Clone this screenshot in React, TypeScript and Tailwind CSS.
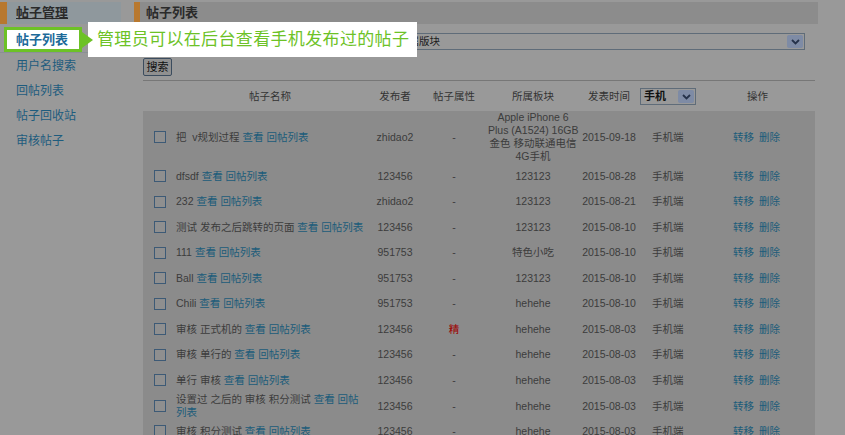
const font = "font-['Liberation_Sans','Noto_Sans_CJK_SC',sans-serif]";

type Row = {
  name: React.ReactNode;
  author: string;
  attr: string;
  board: React.ReactNode;
  date: string;
  tall?: boolean;
};

const Links = ({ br }: { br?: boolean }) => (
  <>
    <span className="text-[#1b5c7a]">查看</span>{' '}
    <span className="text-[#1b5c7a]">
      回帖{br ? <br /> : null}列表
    </span>
  </>
);

const rows: Row[] = [
  {
    name: '把\u00a0 v规划过程',
    author: 'zhidao2',
    attr: '-',
    board: (
      <>
        Apple iPhone 6
        <br />
        Plus (A1524) 16GB
        <br />
        金色 移动联通电信
        <br />
        4G手机
      </>
    ),
    date: '2015-09-18',
    tall: true,
  },
  { name: 'dfsdf', author: '123456', attr: '-', board: '123123', date: '2015-08-28' },
  { name: '232', author: 'zhidao2', attr: '-', board: '123123', date: '2015-08-21' },
  { name: '测试 发布之后跳转的页面', author: '123456', attr: '-', board: '123123', date: '2015-08-10' },
  { name: '111', author: '951753', attr: '-', board: '特色小吃', date: '2015-08-10' },
  { name: 'Ball', author: '951753', attr: '-', board: '123123', date: '2015-08-10' },
  { name: 'Chili', author: '951753', attr: '-', board: 'hehehe', date: '2015-08-10' },
  { name: '审核 正式机的', author: '123456', attr: '精', board: 'hehehe', date: '2015-08-03' },
  { name: '审核 单行的', author: '123456', attr: '-', board: 'hehehe', date: '2015-08-03' },
  { name: '单行 审核', author: '123456', attr: '-', board: 'hehehe', date: '2015-08-03' },
  { name: '设置过 之后的 审核 积分测试', author: '123456', attr: '-', board: 'hehehe', date: '2015-08-03' },
  { name: '审核 积分测试', author: '123456', attr: '-', board: 'hehehe', date: '2015-08-03' },
];

const cols = 'grid grid-cols-[27px_200px_50px_68px_90px_62px_60px_115px]';

function Chevron() {
  return (
    <svg width="9" height="6" viewBox="0 0 9 6">
      <path d="M1 1 L4.5 4.5 L8 1" stroke="#25324a" strokeWidth="1.8" fill="none" />
    </svg>
  );
}

const sideItems = ['帖子列表', '用户名搜索', '回帖列表', '帖子回收站', '审核帖子'];

export default function App() {
  return (
    <div className={`${font} relative flex h-[435px] w-[845px] overflow-hidden bg-[#999999] pt-[2px]`}>
      {/* sidebar */}
      <div className="w-[121px] shrink-0">
        <div className="flex h-[22px] bg-[#8f989d]">
          <div className="w-[7px] bg-[#b8782f]" />
          <span className="pl-[9px] text-[13px] font-bold leading-[22px] text-[#2a2a2a] underline">帖子管理</span>
        </div>
        <div className="mt-[3px] border-b border-[#8a9095]">
          <div className="ml-[4px] flex h-[25px] w-[78px] items-center border-[3px] border-[#6dc226] bg-white pl-[9px] text-[13px] font-bold text-[#1d6a99]">
            {sideItems[0]}
          </div>
        </div>
        {sideItems.slice(1).map((t) => (
          <div key={t} className="flex h-[25px] items-center pl-[16px] text-[12px] text-[#1e5c7e]">
            {t}
          </div>
        ))}
      </div>

      {/* content */}
      <div className="ml-[13px] w-[684px] shrink-0">
        <div className="flex h-[22px] bg-[#8c8c8c]">
          <div className="w-[6px] bg-[#b8782f]" />
          <span className="pl-[6px] text-[13px] font-bold leading-[22px] text-[#2a2a2a]">帖子列表</span>
        </div>

        <div className="ml-[9px] w-[672px]">
          <div className="mt-[9px] flex h-[17px] gap-[6px] pr-[10px]">
            <div className="h-[17px] w-[245px] border border-[#5f6c79] bg-[#999999]" />
            <div className="flex h-[17px] flex-1 items-center justify-between border border-[#5f6c79] bg-[#999999] pl-[3px] pr-[1px]">
              <span className="text-[10.5px] text-[#1c1c1c]">所属版块</span>
              <span className="flex h-[13px] w-[16px] items-center justify-center rounded-[2px] bg-[#7e8ba5]">
                <Chevron />
              </span>
            </div>
          </div>

          <div className="mt-[8px] flex h-[18px] w-[29px] items-center justify-center rounded-[2px] border border-[#3b4c5e] bg-[#909090] text-[11px] text-[#111]">
            搜索
          </div>

          <div className="mt-[4px] h-px bg-[#777777]" />

          {/* table header */}
          <div className={`${cols} h-[30px] items-center pt-[1px] text-[10.5px] text-[#333]`}>
            <div />
            <div className="text-center">帖子名称</div>
            <div className="text-center">发布者</div>
            <div className="text-center">帖子属性</div>
            <div className="text-center">所属板块</div>
            <div className="text-center">发表时间</div>
            <div>
              <div className="flex h-[17px] w-[56px] items-center justify-between border border-[#5f6c79] bg-[#999999] pl-[3px] pr-[1px]">
                <span className="text-[11px] font-bold text-[#111]">手机</span>
                <span className="flex h-[13px] w-[16px] items-center justify-center rounded-[2px] bg-[#7e8ba5]">
                  <Chevron />
                </span>
              </div>
            </div>
            <div className="text-center">操作</div>
          </div>

          {/* table body */}
          <div className="bg-[#8b8b8b] text-[10.5px] leading-[13px] text-[#3c3c3c]">
            {rows.map((r, i) => (
              <div key={i} className={`${cols} items-center ${r.tall ? 'h-[52.5px]' : 'h-[25.5px]'}`}>
                <div className="pl-[11px]">
                  <div className="h-[12px] w-[12px] border border-[#3d5a76] bg-[#8f8f8f]" />
                </div>
                <div className="whitespace-nowrap pl-[6px]">
                  {r.name} <Links br={i === 10} />
                </div>
                <div className="text-center">{r.author}</div>
                <div className={`text-center ${r.attr === '精' ? 'text-[#9e0000]' : ''}`}>{r.attr}</div>
                <div className="whitespace-nowrap text-center">{r.board}</div>
                <div className="text-center">{r.date}</div>
                <div className="pl-[12px]">手机端</div>
                <div className="pr-[2px] text-center text-[#1b5c7a]">
                  转移<span className="inline-block w-[5px]" />删除
                </div>
              </div>
            ))}
          </div>
        </div>
      </div>

      {/* guide callout */}
      <div className="absolute left-[88px] top-[22px] flex h-[35px] w-[329px] items-center bg-white pl-[9px] text-[17px] font-normal tracking-[0.35px] text-[#6dc226]">
        管理员可以在后台查看手机发布过的帖子
      </div>
      <svg className="absolute left-[82px] top-[32px]" width="12" height="16" viewBox="0 0 12 16">
        <path d="M0 0 L11 8 L0 16 Z" fill="#6dc226" />
      </svg>
    </div>
  );
}
